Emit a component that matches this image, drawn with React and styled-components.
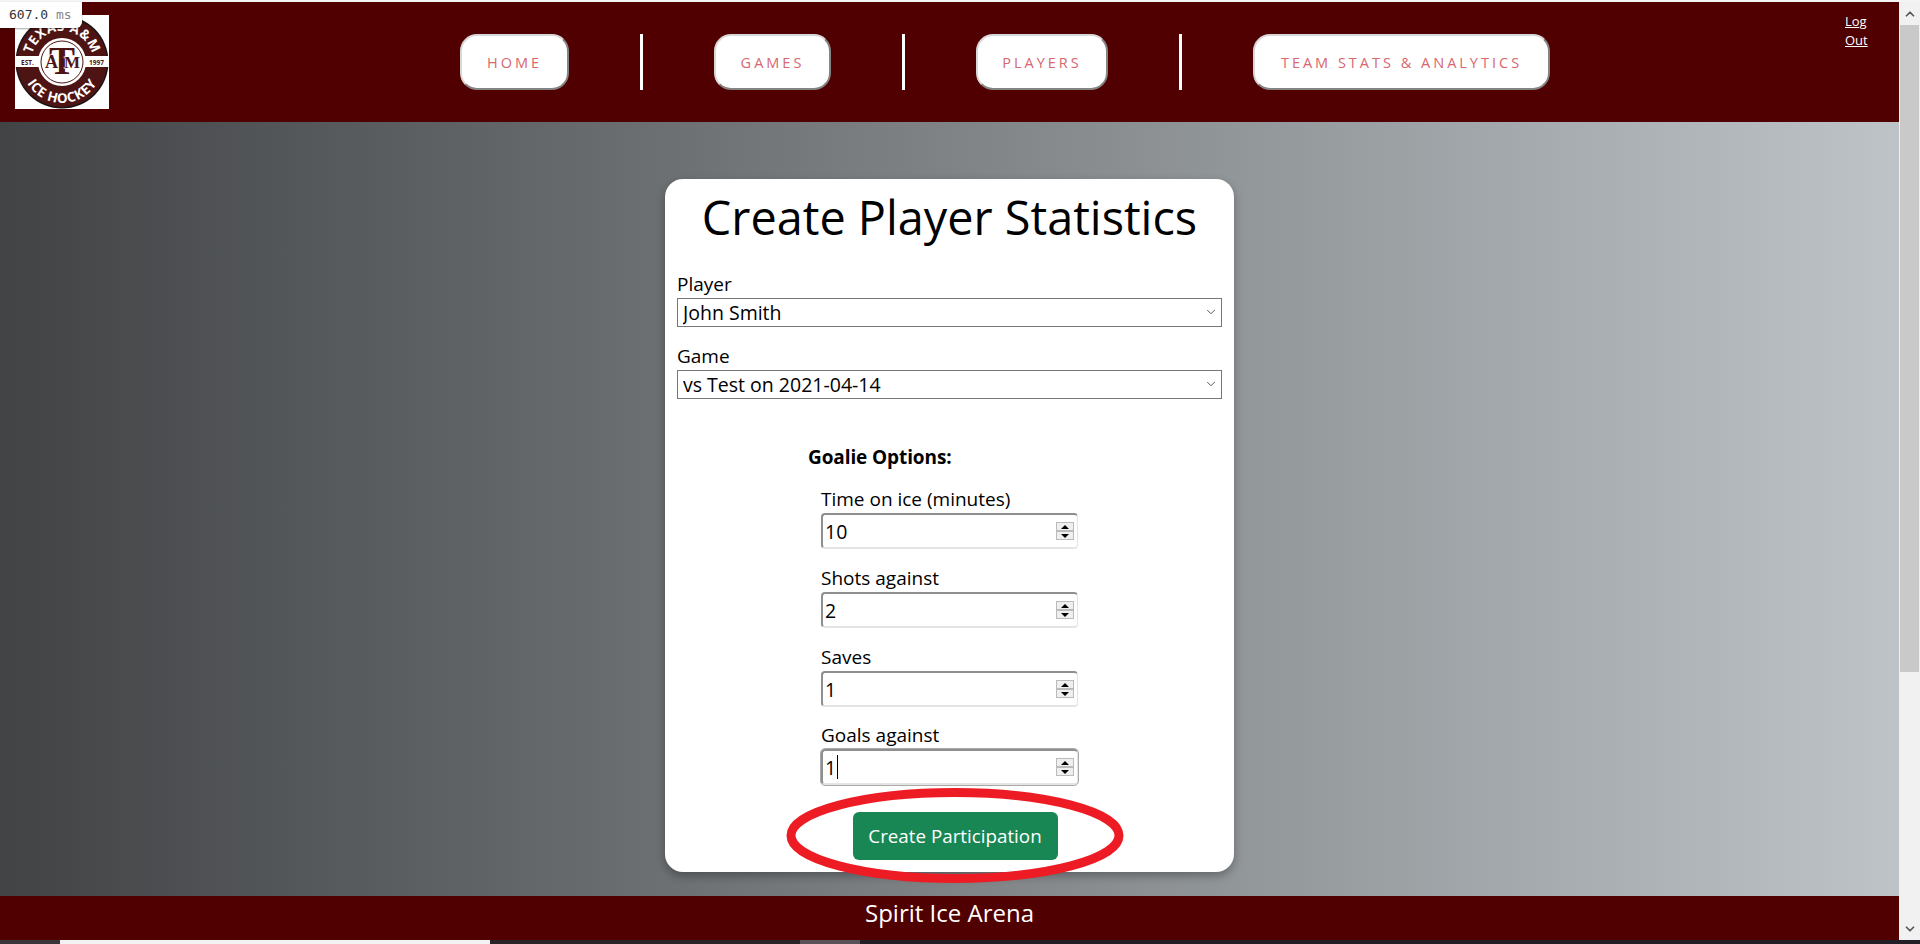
import React from 'react';
import styled, {createGlobalStyle} from 'styled-components';
import {ChevronDown, ChevronUp} from 'lucide-react';

const Global = createGlobalStyle`
html, body {
  margin: 0;
  height: 100%;
  overflow: hidden;
}
#root {
  height: 100%;
}
* {
  box-sizing: border-box;
}
`;

const Screen = styled.div`
position: relative;
height: 944px;
display: flex;
flex-direction: column;
background: #fff;
font-family: "Open Sans", "Noto Sans", sans-serif;
color: #000;
`;

const TopLine = styled.div`
height: 2px;
flex: none;
background: #f4f4f4;
`;

const Timer = styled.div`
position: absolute;
left: 0;
top: 2px;
width: 82px;
height: 26px;
padding-left: 9px;
background: #fff;
border-bottom-right-radius: 6px;
box-shadow: 0 1px 2px rgba(0,0,0,.35);
font: 13px/25px "DejaVu Sans Mono", monospace;
color: #333;
z-index: 5;
span {
  color: #888;
}
`;

const Window = styled.div`
flex: 1;
min-height: 0;
display: flex;
`;

const Page = styled.div`
flex: 1;
min-width: 0;
display: flex;
flex-direction: column;
`;

const Head = styled.header`
height: 120px;
flex: none;
display: flex;
align-items: flex-start;
padding: 4px 30px 0 15px;
background: #500000;
`;

const LogoBox = styled.div`
margin-top: 9px;
height: 94px;
`;

const Nav = styled.nav`
display: flex;
align-items: center;
gap: 71px;
margin: 28px 0 0 351px;
`;

const NavItem = styled.a`
width: ${props => props.$w}px;
height: 56px;
display: flex;
align-items: center;
justify-content: center;
background: #fff;
border: 2px outset #d8d8d8;
border-radius: 17px;
font-size: 14.5px;
letter-spacing: 3px;
color: #d8666f;
white-space: nowrap;
`;

const Divider = styled.div`
width: 3px;
height: 56px;
background: #fff;
`;

const LogOut = styled.a`
width: 24px;
margin: 6px 0 0 auto;
font-size: 13px;
line-height: 19px;
color: #fff;
text-decoration: underline;
`;

const Main = styled.main`
flex: 1;
min-height: 0;
display: flex;
justify-content: center;
padding-top: 57px;
background: linear-gradient(to right, #414345, #bdc3c7);
`;

const Card = styled.section`
position: relative;
width: 569px;
height: 693px;
padding: 0 12px;
background: #fff;
border-radius: 18px;
box-shadow: 0 4px 10px rgba(0,0,0,.3);
`;

const Title = styled.h1`
margin: 0;
padding-top: 6px;
font-size: 46.8px;
line-height: 64px;
font-weight: 400;
text-align: center;
white-space: nowrap;
`;

const Field = styled.div`
margin-top: ${props => props.$top}px;
`;

const Label = styled.label`
display: block;
margin-bottom: 1px;
font-size: 19px;
line-height: 26px;
`;

const SelectWrap = styled.div`
position: relative;
height: 29px;
svg {
  position: absolute;
  right: 4px;
  top: 7px;
  color: #333;
}
`;

const Select = styled.select`
display: block;
width: 100%;
height: 100%;
padding: 0 0 0 5px;
appearance: none;
background: #fff;
border: 1px solid #767676;
border-radius: 0;
font-family: inherit;
font-size: 19.5px;
color: #000;
`;

const Options = styled.div`
margin: 45px 0 0 131px;
width: 280px;
`;

const OptionsTitle = styled.div`
font-size: 19px;
line-height: 26px;
font-weight: 700;
letter-spacing: -.1px;
`;

const Stat = styled.div`
margin: ${props => props.$top}px 0 0 13px;
width: 257px;
`;

const NumberBox = styled.div`
position: relative;
width: 257px;
height: 36px;
display: flex;
align-items: center;
justify-content: space-between;
padding: 0 3px 0 2px;
background: #fff;
border-style: solid;
border-width: 2px 1px 2px 2px;
border-color: #8f8f8f #e4e4e4 #e4e4e4 #8f8f8f;
border-radius: 4px;
font-size: 19.5px;
outline: ${props => (props.$focus ? '1px solid #aaa' : 'none')};
`;

const Value = styled.span`
display: flex;
align-items: center;
`;

const Caret = styled.i`
width: 1px;
height: 24px;
margin-left: 1px;
background: #000;
`;

const Spinner = styled.div`
width: 18px;
height: 18px;
display: flex;
flex-direction: column;
`;

const Arrow = styled.div`
flex: 1;
display: flex;
align-items: center;
justify-content: center;
background: #efefef;
border: 1px solid #bbb;
&::before {
  content: '';
  border-left: 4px solid transparent;
  border-right: 4px solid transparent;
  ${props => (props.$up ? 'border-bottom: 4px solid #000;' : 'border-top: 4px solid #000;')}
}
`;

const SubmitRow = styled.div`
display: flex;
justify-content: center;
margin: 27px 0 0 11px;
`;

const Submit = styled.button`
width: 205px;
height: 48px;
padding: 0;
background: #198754;
border: 0;
border-radius: 6px;
font-family: inherit;
font-size: 18.8px;
color: #fff;
`;

const Ring = styled.svg`
position: absolute;
left: 119px;
top: 608px;
`;

const Foot = styled.footer`
height: 44px;
flex: none;
background: #500000;
color: #fff;
font-size: 24px;
line-height: 33px;
text-align: center;
`;

const Scrollbar = styled.aside`
width: 21px;
flex: none;
display: flex;
flex-direction: column;
background: #f1f1f1;
color: #555;
align-items: center;
`;

const ScrollButton = styled.div`
height: 23px;
flex: none;
display: flex;
align-items: center;
justify-content: center;
`;

const Thumb = styled.div`
width: 19px;
height: 647px;
background: #c9c9c9;
`;

const Gap = styled.div`
flex: 1;
`;

const Taskbar = styled.div`
height: 4px;
flex: none;
display: flex;
background: #241f26;
`;

const Segment = styled.div`
width: ${props => props.$w}px;
background: ${props => props.$c};
`;

const Logo = () => (
  <svg width="94" height="94" viewBox="0 0 94 94" style={{display: 'block'}}>
    <rect width="94" height="94" fill="#fff" />
    <circle cx="47" cy="47" r="46.5" fill="#1d1414" />
    <circle cx="47" cy="47" r="45" fill="#4e1414" />
    <defs>
      <path id="arcTop" d="M16 47a31 31 0 0 1 62 0" />
      <path id="arcBottom" d="M6 47a41 41 0 0 0 82 0" />
    </defs>
    <text fontFamily="Open Sans" fontSize="13.5" fontWeight="700" fill="#fff" letterSpacing=".5">
      <textPath href="#arcTop" startOffset="50%" textAnchor="middle">TEXAS A&amp;M</textPath>
    </text>
    <text fontFamily="Open Sans" fontSize="13.5" fontWeight="700" fill="#fff" letterSpacing=".5">
      <textPath href="#arcBottom" startOffset="50%" textAnchor="middle">ICE HOCKEY</textPath>
    </text>
    <rect x="0" y="41" width="94" height="11" fill="#fff" />
    <circle cx="47" cy="47" r="24" fill="#fff" />
    <circle cx="47" cy="47" r="21" fill="#fff" stroke="#4e1414" strokeWidth="1" />
    <text x="12.5" y="49.5" textAnchor="middle" fontFamily="Open Sans" fontSize="6.5" fontWeight="700" fill="#4e1414">EST.</text>
    <text x="81.5" y="49.5" textAnchor="middle" fontFamily="Open Sans" fontSize="6.5" fontWeight="700" fill="#4e1414">1997</text>
    <text x="47" y="59" textAnchor="middle" fontFamily="Liberation Serif" fontSize="39" fontWeight="700" fill="#4e1414">T</text>
    <text x="36.5" y="53" textAnchor="middle" fontFamily="Liberation Serif" fontSize="18" fontWeight="700" fill="#4e1414" stroke="#fff" strokeWidth="1" paintOrder="stroke">A</text>
    <text x="57" y="53" textAnchor="middle" fontFamily="Liberation Serif" fontSize="17" fontWeight="700" fill="#4e1414" stroke="#fff" strokeWidth="1" paintOrder="stroke">M</text>
  </svg>
);

const stats = [
  {label: 'Time on ice (minutes)', value: '10', top: 16},
  {label: 'Shots against', value: '2', top: 16},
  {label: 'Saves', value: '1', top: 16},
  {label: 'Goals against', value: '1', top: 15, focus: true},
];

export default function App() {
  return (
    <Screen>
      <Global />
      <TopLine />
      <Timer>607.0 <span>ms</span></Timer>
      <Window>
        <Page>
          <Head>
            <LogoBox><Logo /></LogoBox>
            <Nav>
              <NavItem $w={109}>HOME</NavItem>
              <Divider />
              <NavItem $w={117}>GAMES</NavItem>
              <Divider />
              <NavItem $w={132}>PLAYERS</NavItem>
              <Divider />
              <NavItem $w={297}>TEAM STATS &amp; ANALYTICS</NavItem>
            </Nav>
            <LogOut>Log Out</LogOut>
          </Head>
          <Main>
            <Card>
              <Title>Create Player Statistics</Title>
              <Field $top={22}>
                <Label>Player</Label>
                <SelectWrap>
                  <Select defaultValue="john"><option value="john">John Smith</option></Select>
                  <ChevronDown size={14} strokeWidth={1.4} />
                </SelectWrap>
              </Field>
              <Field $top={16}>
                <Label>Game</Label>
                <SelectWrap>
                  <Select defaultValue="test"><option value="test">vs Test on 2021-04-14</option></Select>
                  <ChevronDown size={14} strokeWidth={1.4} />
                </SelectWrap>
              </Field>
              <Options>
                <OptionsTitle>Goalie Options:</OptionsTitle>
                {stats.map(s => (
                  <Stat key={s.label} $top={s.top}>
                    <Label>{s.label}</Label>
                    <NumberBox $focus={s.focus}>
                      <Value>{s.value}{s.focus && <Caret />}</Value>
                      <Spinner><Arrow $up /><Arrow /></Spinner>
                    </NumberBox>
                  </Stat>
                ))}
              </Options>
              <SubmitRow>
                <Submit>Create Participation</Submit>
              </SubmitRow>
              <Ring width="342" height="97" viewBox="0 0 342 97">
                <ellipse cx="171" cy="48.5" rx="164" ry="43" fill="none" stroke="#ed1c24" strokeWidth="9" />
              </Ring>
            </Card>
          </Main>
          <Foot>Spirit Ice Arena</Foot>
        </Page>
        <Scrollbar>
          <ScrollButton><ChevronUp size={14} strokeWidth={3} /></ScrollButton>
          <Thumb />
          <Gap />
          <ScrollButton><ChevronDown size={14} strokeWidth={3} /></ScrollButton>
        </Scrollbar>
      </Window>
      <Taskbar>
        <Segment $w={60} $c="#3a353a" />
        <Segment $w={430} $c="#f2f2f2" />
        <Segment $w={310} $c="#2a2429" />
        <Segment $w={60} $c="#5a5258" />
      </Taskbar>
    </Screen>
  );
}
